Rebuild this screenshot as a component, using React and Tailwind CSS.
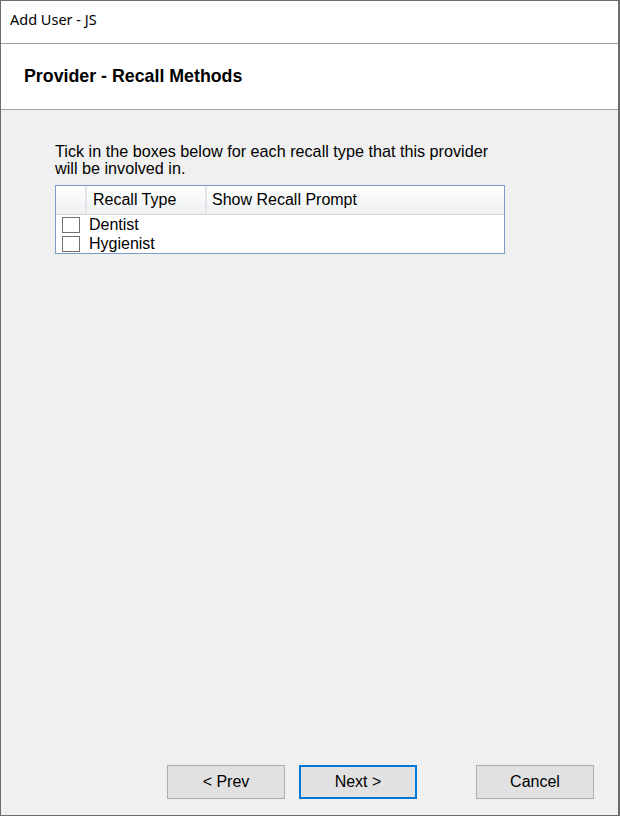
import React from 'react';

const sans = { fontFamily: '"Liberation Sans", Arial, sans-serif' };

const Button = ({ children, primary = false }) => (
  <button
    className={`w-[118px] h-[34px] bg-[#e1e1e1] text-[16px] text-black flex items-center justify-center ${primary ? 'border-2 border-[#0078d7]' : 'border border-[#adadad]'}`}
    style={sans}
  >
    {children}
  </button>
);

const Row = ({ label }) => (
  <div className="flex items-center h-[19px]">
    <div className="w-[31px] flex pl-[6px]">
      <span className="block w-[18px] h-[16px] border border-[#6f6f6f] bg-white" />
    </div>
    <span className="text-[16px] leading-[19px] pl-[2px] text-black">{label}</span>
  </div>
);

export default function App() {
  return (
    <div className="w-[620px] h-[816px] bg-[#f0f0f0]">
      <div className="w-[620px] h-[816px] border border-[#6d6d6d] border-r-[2px] flex flex-col bg-[#f0f0f0]">
        {/* Title bar */}
        <div
          className="h-[43px] bg-white flex items-center pl-[9px] pb-[5px] text-[14.5px] text-black border-b border-[#a0a0a0]"
          style={{ fontFamily: '"Noto Sans", "Open Sans", sans-serif' }}
        >
          Add User - JS
        </div>

        {/* Header */}
        <div className="h-[66px] bg-white border-b border-[#a0a0a0] flex items-center pl-[23px]">
          <h1 className="text-[17.8px] font-bold text-black" style={sans}>
            Provider - Recall Methods
          </h1>
        </div>

        {/* Body */}
        <div className="flex-1 pt-[33px] pl-[54px]" style={sans}>
          <p className="text-[16.2px] leading-[17px] text-black w-[450px]">
            Tick in the boxes below for each recall type that this provider will be involved in.
          </p>
          <div className="mt-[8px] w-[450px] h-[69px] border border-[#7a9cc7] bg-white">
            <div className="flex h-[29px] bg-gradient-to-b from-white to-[#eef0f2] border-b border-[#d6d6d6] text-[16px] text-black">
              <div className="w-[31px] border-r-2 border-[#e3e5e8]" />
              <div className="w-[120px] border-r-2 border-[#e3e5e8] flex items-center pl-[6px]">Recall Type</div>
              <div className="flex-1 flex items-center pl-[5px]">Show Recall Prompt</div>
            </div>
            <Row label="Dentist" />
            <Row label="Hygienist" />
          </div>
        </div>

        {/* Buttons */}
        <div className="flex items-center pl-[166px] pb-[16px]">
          <Button>&lt; Prev</Button>
          <div className="ml-[14px]">
            <Button primary>Next &gt;</Button>
          </div>
          <div className="ml-[59px]">
            <Button>Cancel</Button>
          </div>
        </div>
      </div>
    </div>
  );
}
